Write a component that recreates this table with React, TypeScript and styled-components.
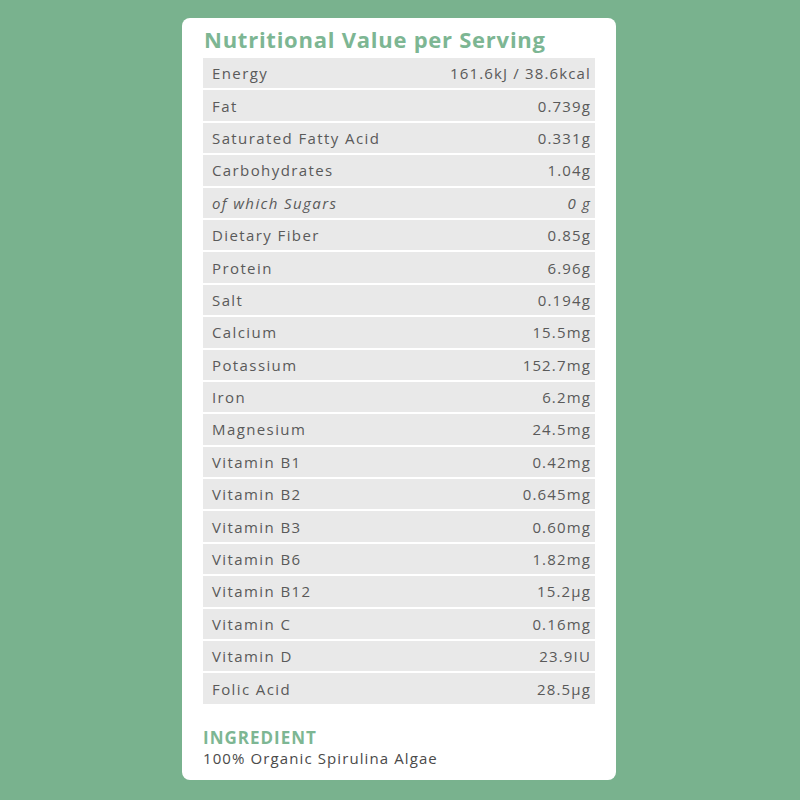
import React from "react";
import styled, { createGlobalStyle } from "styled-components";

const GlobalStyle = createGlobalStyle`
    html, body {
        margin: 0;
        padding: 0;
        background-color: #79b28e;
    }
    body {
        font-family: "Open Sans", "Lato", sans-serif;
    }
`;

const Page = styled.div`
    width: 800px;
    height: 800px;
    box-sizing: border-box;
    padding-top: 18px;
    display: flex;
    justify-content: center;
    align-items: flex-start;
    background-color: #79b28e;
`;

const Card = styled.div`
    width: 434px;
    margin-left: -2px;
    box-sizing: border-box;
    background-color: #ffffff;
    border-radius: 8px;
    padding: 9px 21px 11px 21px;
    display: flex;
    flex-direction: column;
`;

const Title = styled.h1`
    margin: 0 0 7px 1px;
    font-size: 22px;
    line-height: 24px;
    font-weight: 700;
    color: #7db693;
    letter-spacing: 0.75px;
`;

const Table = styled.div`
    display: flex;
    flex-direction: column;
    gap: 2px;
`;

const Row = styled.div<{ $italic?: boolean }>`
    height: 30.4px;
    display: flex;
    align-items: center;
    justify-content: space-between;
    padding: 0 4px 0 9px;
    background-color: #e9e9e9;
    color: #5a5a5a;
    font-size: 15px;
    letter-spacing: 1.15px;
    font-style: ${(props) => (props.$italic ? "italic" : "normal")};
`;

const Name = styled.span`
    letter-spacing: 1.4px;
`;

const Ingredient = styled.div`
    margin-top: 24px;
    display: flex;
    flex-direction: column;
`;

const IngredientLabel = styled.div`
    font-size: 17px;
    line-height: 20px;
    font-weight: 700;
    color: #7db693;
    letter-spacing: 1px;
`;

const IngredientText = styled.div`
    font-size: 15px;
    line-height: 21px;
    color: #4a4a4a;
    letter-spacing: 1.1px;
`;

const nutrients: [string, string, boolean?][] = [
    ["Energy", "161.6kJ / 38.6kcal"],
    ["Fat", "0.739g"],
    ["Saturated Fatty Acid", "0.331g"],
    ["Carbohydrates", "1.04g"],
    ["of which Sugars", "0 g", true],
    ["Dietary Fiber", "0.85g"],
    ["Protein", "6.96g"],
    ["Salt", "0.194g"],
    ["Calcium", "15.5mg"],
    ["Potassium", "152.7mg"],
    ["Iron", "6.2mg"],
    ["Magnesium", "24.5mg"],
    ["Vitamin B1", "0.42mg"],
    ["Vitamin B2", "0.645mg"],
    ["Vitamin B3", "0.60mg"],
    ["Vitamin B6", "1.82mg"],
    ["Vitamin B12", "15.2µg"],
    ["Vitamin C", "0.16mg"],
    ["Vitamin D", "23.9IU"],
    ["Folic Acid", "28.5µg"],
];

const App = () => {
    return (
        <Page>
            <GlobalStyle />
            <Card>
                <Title>Nutritional Value per Serving</Title>
                <Table>
                    {nutrients.map(([name, value, italic]) => (
                        <Row key={name} $italic={italic}>
                            <Name>{name}</Name>
                            <span>{value}</span>
                        </Row>
                    ))}
                </Table>
                <Ingredient>
                    <IngredientLabel>INGREDIENT</IngredientLabel>
                    <IngredientText>100% Organic Spirulina Algae</IngredientText>
                </Ingredient>
            </Card>
        </Page>
    );
};

export default App;
